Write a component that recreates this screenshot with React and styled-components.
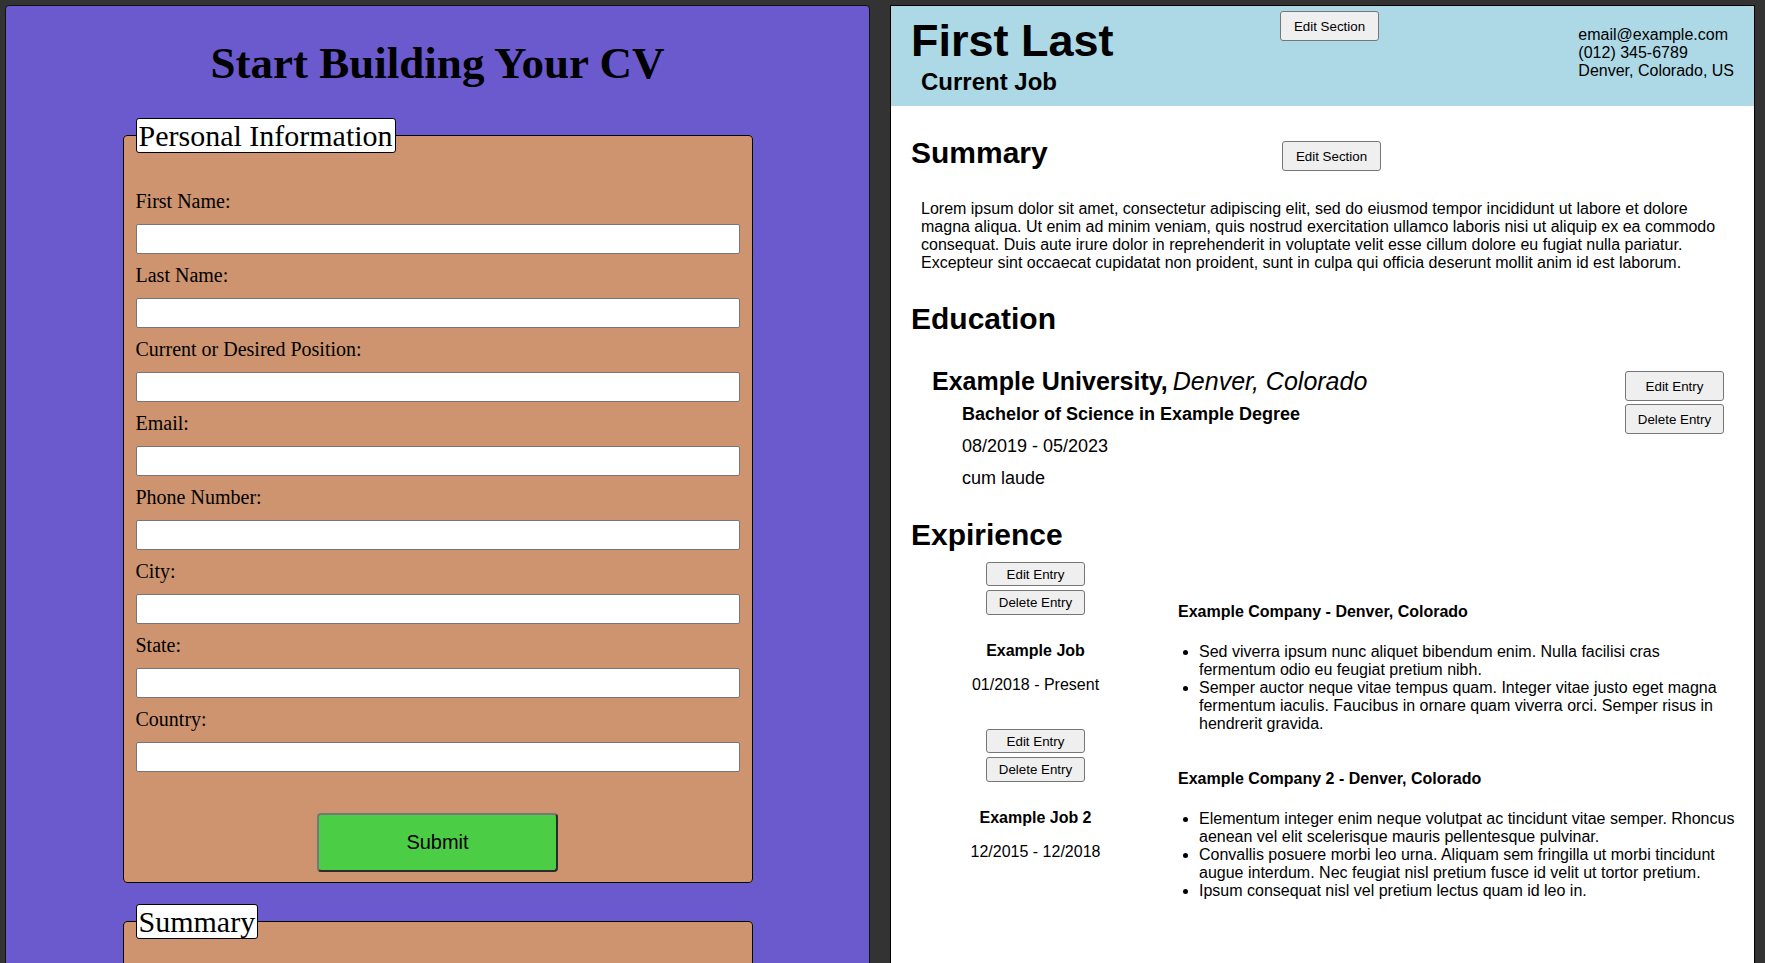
import React from 'react';
import styled, { createGlobalStyle } from 'styled-components';

const GlobalStyle = createGlobalStyle`
    html, body {
        margin: 0;
        padding: 0;
        height: 100%;
        overflow: hidden;
        background: #333333;
    }
    body {
        font-family: "Liberation Serif", "Times New Roman", serif;
        color: #000;
    }
    #root {
        height: 100%;
    }
`;

const Page = styled.div`
    display: grid;
    grid-template-columns: 865px 865px;
    column-gap: 20px;
    padding: 5px 10px 0 5px;
    box-sizing: border-box;
    height: 100%;
`;

/* ---------- editor (left) ---------- */

const EditorPanel = styled.section`
    background: #6a5acd;
    border: 1px solid #111;
    border-radius: 4px;
    min-height: 1200px;
`;

const Title = styled.h1`
    font-size: 45px;
    font-weight: bold;
    text-align: center;
    margin: 31px 0 29px;
`;

const FormSection = styled.fieldset`
    width: 630px;
    box-sizing: border-box;
    margin: 0 auto 21px;
    padding: 0 12px 10px;
    background: #cd946f;
    border: 1px solid #000;
    border-radius: 4px;
`;

const Legend = styled.legend`
    background: #fff;
    border: 1px solid #000;
    border-radius: 3px;
    font-size: 30px;
    line-height: 33px;
    padding: 0 2px;
`;

const FieldList = styled.div`
    display: flex;
    flex-direction: column;
    gap: 10px;
    padding-top: 37px;
`;

const Field = styled.div`
    display: flex;
    flex-direction: column;
    gap: 11px;
`;

const Label = styled.label`
    font-size: 20px;
    line-height: 23px;
`;

const TextInput = styled.input`
    box-sizing: border-box;
    width: 100%;
    height: 30px;
    margin: 0;
    border: 1px solid #767676;
    border-radius: 2px;
    background: #fff;
`;

const TextArea = styled.textarea`
    box-sizing: border-box;
    width: 100%;
    height: 160px;
    margin-top: 36px;
    border: 1px solid #767676;
`;

const SubmitButton = styled.button`
    display: block;
    width: 241px;
    height: 59px;
    margin: 41px auto 0;
    background: #4ccd46;
    border: 2px solid;
    border-color: #777 #2b2b2b #2b2b2b #777;
    border-radius: 4px;
    font-family: "Liberation Sans", Arial, sans-serif;
    font-size: 20px;
    color: #000;
`;

/* ---------- preview (right) ---------- */

const PreviewPanel = styled.section`
    background: #fff;
    border: 1px solid #000;
    font-family: "Liberation Sans", Arial, sans-serif;
    min-height: 1200px;
`;

const Header = styled.header`
    background: #add8e6;
    height: 100px;
    box-sizing: border-box;
    padding: 0 20px;
    display: grid;
    grid-template-columns: 369px auto 1fr;
    align-items: start;
`;

const NameBlock = styled.div`
    padding-top: 9px;
`;

const Name = styled.h1`
    font-size: 45px;
    margin: 0;
`;

const CurrentJob = styled.h2`
    font-size: 24px;
    margin: 1px 0 0 10px;
`;

const Contact = styled.div`
    justify-self: end;
    margin-top: 20px;
    font-size: 16px;
`;

const SmallButton = styled.button`
    width: 99px;
    height: ${(props) => props.h || 30}px;
    margin-top: ${(props) => props.top || 0}px;
    padding: 0;
    background: #efefef;
    border: 1px solid #767676;
    border-radius: 3px;
    font-family: "Liberation Sans", Arial, sans-serif;
    font-size: 13.333px;
    color: #000;
`;

const Body = styled.div`
    padding: 0 16px 0 20px;
`;

const SectionHead = styled.div`
    display: grid;
    grid-template-columns: 371px auto;
    align-items: start;
    padding-top: 30px;
`;

const SectionTitle = styled.h2`
    font-size: 30px;
    margin: ${(props) => props.top || 0}px 0 0;
`;

const SummaryText = styled.p`
    font-size: 16px;
    margin: 29px 10px 0 10px;
`;

const EduEntry = styled.div`
    display: flex;
    justify-content: space-between;
    align-items: flex-start;
    margin-top: 31px;
    padding: 0 14px 0 21px;
`;

const EduTitle = styled.h3`
    font-size: 25px;
    font-weight: bold;
    margin: 0;
`;

const EduPlace = styled.em`
    font-weight: normal;
    margin-left: 5px;
`;

const EduDetails = styled.div`
    display: flex;
    flex-direction: column;
    gap: 11px;
    margin: 8px 0 0 30px;
    font-size: 18px;
`;

const Degree = styled.div`
    font-weight: bold;
`;

const ButtonStack = styled.div`
    display: flex;
    flex-direction: column;
    align-items: center;
    gap: ${(props) => props.gap}px;
    margin-top: ${(props) => props.top || 0}px;
`;

const JobList = styled.div`
    margin-top: 10px;
`;

const JobRow = styled.div`
    display: grid;
    grid-template-columns: 249px 1fr;
    height: 167px;
`;

const JobSide = styled.div`
    display: flex;
    flex-direction: column;
    align-items: center;
    font-size: 16px;
`;

const JobName = styled.div`
    font-weight: bold;
    margin-top: 27px;
`;

const JobDates = styled.div`
    margin-top: 16px;
`;

const JobMain = styled.div`
    padding-left: 18px;
    font-size: 16px;
`;

const Company = styled.div`
    font-weight: bold;
    margin-top: 41px;
`;

const Bullets = styled.ul`
    margin: 22px 0 0;
    padding-left: 21px;
`;

const fields = [
    'First Name:',
    'Last Name:',
    'Current or Desired Position:',
    'Email:',
    'Phone Number:',
    'City:',
    'State:',
    'Country:',
];

const jobs = [
    {
        title: 'Example Job',
        dates: '01/2018 - Present',
        company: 'Example Company - Denver, Colorado',
        points: [
            'Sed viverra ipsum nunc aliquet bibendum enim. Nulla facilisi cras fermentum odio eu feugiat pretium nibh.',
            'Semper auctor neque vitae tempus quam. Integer vitae justo eget magna fermentum iaculis. Faucibus in ornare quam viverra orci. Semper risus in hendrerit gravida.',
        ],
    },
    {
        title: 'Example Job 2',
        dates: '12/2015 - 12/2018',
        company: 'Example Company 2 - Denver, Colorado',
        points: [
            'Elementum integer enim neque volutpat ac tincidunt vitae semper. Rhoncus aenean vel elit scelerisque mauris pellentesque pulvinar.',
            'Convallis posuere morbi leo urna. Aliquam sem fringilla ut morbi tincidunt augue interdum. Nec feugiat nisl pretium fusce id velit ut tortor pretium.',
            'Ipsum consequat nisl vel pretium lectus quam id leo in.',
        ],
    },
];

const App = () => {
    return (
        <>
            <GlobalStyle />
            <Page>
                <EditorPanel>
                    <Title>Start Building Your CV</Title>
                    <FormSection>
                        <Legend>Personal Information</Legend>
                        <FieldList>
                            {fields.map((f) => (
                                <Field key={f}>
                                    <Label>{f}</Label>
                                    <TextInput type="text" />
                                </Field>
                            ))}
                        </FieldList>
                        <SubmitButton>Submit</SubmitButton>
                    </FormSection>
                    <FormSection>
                        <Legend>Summary</Legend>
                        <TextArea />
                        <SubmitButton>Submit</SubmitButton>
                    </FormSection>
                </EditorPanel>

                <PreviewPanel>
                    <Header>
                        <NameBlock>
                            <Name>First Last</Name>
                            <CurrentJob>Current Job</CurrentJob>
                        </NameBlock>
                        <SmallButton top={5}>Edit Section</SmallButton>
                        <Contact>
                            <div>email@example.com</div>
                            <div>(012) 345-6789</div>
                            <div>Denver, Colorado, US</div>
                        </Contact>
                    </Header>
                    <Body>
                        <SectionHead>
                            <SectionTitle>Summary</SectionTitle>
                            <SmallButton top={5}>Edit Section</SmallButton>
                        </SectionHead>
                        <SummaryText>
                            Lorem ipsum dolor sit amet, consectetur adipiscing elit, sed do eiusmod tempor incididunt ut labore et dolore magna aliqua. Ut enim ad minim veniam, quis nostrud exercitation ullamco laboris nisi ut aliquip ex ea commodo consequat. Duis aute irure dolor in reprehenderit in voluptate velit esse cillum dolore eu fugiat nulla pariatur. Excepteur sint occaecat cupidatat non proident, sunt in culpa qui officia deserunt mollit anim id est laborum.
                        </SummaryText>

                        <SectionTitle top={30}>Education</SectionTitle>
                        <EduEntry>
                            <div>
                                <EduTitle>
                                    Example University,<EduPlace>Denver, Colorado</EduPlace>
                                </EduTitle>
                                <EduDetails>
                                    <Degree>Bachelor of Science in Example Degree</Degree>
                                    <div>08/2019 - 05/2023</div>
                                    <div>cum laude</div>
                                </EduDetails>
                            </div>
                            <ButtonStack gap={3} top={4}>
                                <SmallButton>Edit Entry</SmallButton>
                                <SmallButton>Delete Entry</SmallButton>
                            </ButtonStack>
                        </EduEntry>

                        <SectionTitle top={29}>Expirience</SectionTitle>
                        <JobList>
                            {jobs.map((job) => (
                                <JobRow key={job.title}>
                                    <JobSide>
                                        <ButtonStack gap={4}>
                                            <SmallButton h={24}>Edit Entry</SmallButton>
                                            <SmallButton h={25}>Delete Entry</SmallButton>
                                        </ButtonStack>
                                        <JobName>{job.title}</JobName>
                                        <JobDates>{job.dates}</JobDates>
                                    </JobSide>
                                    <JobMain>
                                        <Company>{job.company}</Company>
                                        <Bullets>
                                            {job.points.map((p) => (
                                                <li key={p}>{p}</li>
                                            ))}
                                        </Bullets>
                                    </JobMain>
                                </JobRow>
                            ))}
                        </JobList>
                    </Body>
                </PreviewPanel>
            </Page>
        </>
    );
};

export default App;
